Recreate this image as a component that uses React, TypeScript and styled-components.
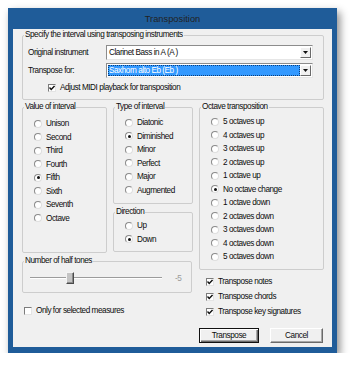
import styled, { createGlobalStyle } from 'styled-components';

const GlobalStyle = createGlobalStyle`
  html, body {
    margin: 0;
    padding: 0;
    background: #ffffff;
  }
  body {
    font-family: "Liberation Sans", Arial, sans-serif;
    font-size: 8.2px;
    letter-spacing: -0.45px;
    color: #0c0c0c;
  }
`;

const Window = styled.div`
  box-sizing: border-box;
  width: 329px;
  height: 345px;
  margin: 8px 0 0 8px;
  padding: 0 5px 6px;
  display: flex;
  flex-direction: column;
  background: #1f5c99;
  box-shadow: 3px 4px 8px rgba(0, 0, 0, 0.45);
`;

const TitleBar = styled.div`
  height: 21px;
  display: flex;
  align-items: center;
  justify-content: center;
  font-size: 9.3px;
  letter-spacing: 0;
  color: #222;
`;

const Client = styled.div`
  flex: 1;
  background: #f0f0f0;
  padding: 1px 8px 0 9px;
`;

const Group = styled.fieldset<{ $w: number; $h: number }>`
  box-sizing: border-box;
  width: ${p => p.$w}px;
  height: ${p => p.$h}px;
  margin: 0;
  padding: 0;
  min-inline-size: 0;
  border: 1px solid #cdcdcd;
  border-radius: 2px;
`;

const Legend = styled.legend`
  height: 10px;
  line-height: 10px;
  padding: 0 1px;
  margin-left: 1px;
  white-space: nowrap;
`;

const InstrumentGrid = styled.div`
  display: grid;
  grid-template-columns: 78px 207px;
  grid-auto-rows: 15px;
  row-gap: 3px;
  padding: 5px 0 0 5px;
  align-items: center;
`;

const Combo = styled.div`
  box-sizing: border-box;
  height: 15px;
  display: flex;
  background: #fff;
  border: 1px solid;
  border-color: #8c8c8c #e6e6e6 #e6e6e6 #8c8c8c;
  padding: 1px;
`;

const ComboText = styled.span<{ $selected?: boolean }>`
  flex: 1;
  display: flex;
  align-items: center;
  padding-left: 1px;
  white-space: nowrap;
  background: ${p => (p.$selected ? '#3399ff' : 'transparent')};
  color: ${p => (p.$selected ? '#ffffff' : 'inherit')};
  outline: ${p => (p.$selected ? '1px dotted #0b3d78' : 'none')};
  outline-offset: -1px;
`;

const DropButton = styled.span`
  box-sizing: border-box;
  width: 11px;
  display: flex;
  align-items: center;
  justify-content: center;
  background: #f0f0f0;
  border: 1px solid;
  border-color: #ffffff #6a6a6a #6a6a6a #ffffff;
`;

const CheckRow = styled.label<{ $indent?: number }>`
  display: flex;
  align-items: center;
  gap: 4px;
  height: 15px;
  margin-left: ${p => p.$indent ?? 0}px;
  white-space: nowrap;
`;

const CheckBox = styled.span`
  box-sizing: border-box;
  width: 8px;
  height: 8px;
  flex: none;
  display: flex;
  align-items: center;
  justify-content: center;
  background: #fff;
  border: 1px solid;
  border-color: #7c7c7c #e4e4e4 #e4e4e4 #7c7c7c;
`;

const MainRow = styled.div`
  display: flex;
  gap: 6px;
  margin-top: 2px;
`;

const Column = styled.div<{ $w: number }>`
  width: ${p => p.$w}px;
  display: flex;
  flex-direction: column;
`;

const GroupRow = styled.div`
  display: flex;
  gap: 6px;
`;

const Stack = styled.div`
  display: flex;
  flex-direction: column;
  gap: 3px;
`;

const OptionList = styled.div<{ $top: number }>`
  padding: ${p => p.$top}px 0 0 11px;
`;

const Option = styled.label`
  display: flex;
  align-items: center;
  gap: 4px;
  height: 13.5px;
  white-space: nowrap;
`;

const Radio = styled.span<{ $on?: boolean }>`
  box-sizing: border-box;
  width: 8px;
  height: 8px;
  flex: none;
  border-radius: 50%;
  display: flex;
  align-items: center;
  justify-content: center;
  background: #fff;
  border: 1px solid;
  border-color: #8a8a8a #dedede #dedede #8a8a8a;

  &::after {
    content: '';
    width: 3px;
    height: 3px;
    border-radius: 50%;
    background: ${p => (p.$on ? '#111' : 'transparent')};
  }
`;

const HalfTones = styled(Group)`
  margin-top: 3px;
`;

const SliderRow = styled.div`
  display: flex;
  align-items: center;
  height: 12px;
  padding: 6px 0 0 7px;
`;

const Track = styled.div`
  position: relative;
  width: 132px;
  height: 0;
  border-top: 1px solid #9c9c9c;
  border-bottom: 1px solid #ffffff;
`;

const Thumb = styled.span`
  position: absolute;
  top: -6px;
  box-sizing: border-box;
  width: 8px;
  height: 12px;
  background: #c4c4c4;
  border: 1px solid;
  border-color: #f4f4f4 #4a4a4a #4a4a4a #f4f4f4;
  box-shadow: inset -1px -1px 0 #8a8a8a;
`;

const SliderValue = styled.span`
  margin-left: 13px;
  color: #9a9a9a;
`;

const Buttons = styled.div`
  display: flex;
  gap: 11px;
  margin-top: 9px;
`;

const Button = styled.button<{ $w: number; $default?: boolean }>`
  box-sizing: border-box;
  width: ${p => p.$w}px;
  height: 15px;
  padding: 0;
  font: inherit;
  letter-spacing: inherit;
  color: inherit;
  background: #f0f0f0;
  border: 1px solid;
  border-color: ${p => (p.$default ? '#111' : '#ffffff #6a6a6a #6a6a6a #ffffff')};
  box-shadow: ${p =>
    p.$default
      ? 'inset 1px 1px 0 #fff, inset -1px -1px 0 #6a6a6a, inset -2px -2px 0 #a8a8a8'
      : 'inset -1px -1px 0 #a8a8a8'};
`;

const Check = () => (
  <svg width="6" height="6" viewBox="0 0 6 6">
    <path d="M0.5 2.6 L2.2 4.4 L5.5 0.9" stroke="#111" strokeWidth="1.4" fill="none" />
  </svg>
);

const Arrow = () => (
  <svg width="5" height="3" viewBox="0 0 5 3">
    <path d="M0 0 H5 L2.5 3 Z" fill="#111" />
  </svg>
);

const intervals = ['Unison', 'Second', 'Third', 'Fourth', 'Fifth', 'Sixth', 'Seventh', 'Octave'];
const types = ['Diatonic', 'Diminished', 'Minor', 'Perfect', 'Major', 'Augmented'];
const octaves = [
  '5 octaves up',
  '4 octaves up',
  '3 octaves up',
  '2 octaves up',
  '1 octave up',
  'No octave change',
  '1 octave down',
  '2 octaves down',
  '3 octaves down',
  '4 octaves down',
  '5 octaves down',
];

const halfTones = { min: -12, max: 12, value: -5 };

function RadioGroup({ items, selected, top }: { items: string[]; selected: string; top: number }) {
  return (
    <OptionList $top={top}>
      {items.map(item => (
        <Option key={item}>
          <Radio $on={item === selected} />
          {item}
        </Option>
      ))}
    </OptionList>
  );
}

export default function App() {
  const thumbLeft = ((halfTones.value - halfTones.min) / (halfTones.max - halfTones.min)) * (132 - 8);

  return (
    <>
      <GlobalStyle />
      <Window>
        <TitleBar>Transposition</TitleBar>
        <Client>
          <Group $w={302} $h={70}>
            <Legend>Specify the interval using transposing instruments</Legend>
            <InstrumentGrid>
              <span>Original instrument</span>
              <Combo>
                <ComboText>Clarinet Bass in A (A )</ComboText>
                <DropButton><Arrow /></DropButton>
              </Combo>
              <span>Transpose for:</span>
              <Combo>
                <ComboText $selected>Saxhorn alto Eb (Eb )</ComboText>
                <DropButton><Arrow /></DropButton>
              </Combo>
            </InstrumentGrid>
            <CheckRow $indent={25} style={{ marginTop: 2 }}>
              <CheckBox><Check /></CheckBox>
              Adjust MIDI playback for transposition
            </CheckRow>
          </Group>

          <MainRow>
            <Column $w={171}>
              <GroupRow>
                <Group $w={85} $h={151}>
                  <Legend>Value of interval</Legend>
                  <RadioGroup items={intervals} selected="Fifth" top={5} />
                </Group>
                <Stack>
                  <Group $w={80} $h={102}>
                    <Legend>Type of interval</Legend>
                    <RadioGroup items={types} selected="Diminished" top={4} />
                  </Group>
                  <Group $w={80} $h={45}>
                    <Legend>Direction</Legend>
                    <RadioGroup items={['Up', 'Down']} selected="Down" top={2} />
                  </Group>
                </Stack>
              </GroupRow>
              <HalfTones $w={170} $h={37}>
                <Legend>Number of half tones</Legend>
                <SliderRow>
                  <Track>
                    <Thumb style={{ left: thumbLeft }} />
                  </Track>
                  <SliderValue>{halfTones.value}</SliderValue>
                </SliderRow>
              </HalfTones>
              <CheckRow $indent={2} style={{ marginTop: 10 }}>
                <CheckBox />
                Only for selected measures
              </CheckRow>
            </Column>

            <Column $w={125}>
              <Group $w={125} $h={168}>
                <Legend>Octave transposition</Legend>
                <RadioGroup items={octaves} selected="No octave change" top={3} />
              </Group>
              <div style={{ marginTop: 4 }}>
                {['Transpose notes', 'Transpose chords', 'Transpose key signatures'].map(label => (
                  <CheckRow key={label} $indent={7}>
                    <CheckBox><Check /></CheckBox>
                    {label}
                  </CheckRow>
                ))}
              </div>
              <Buttons>
                <Button $w={60} $default>Transpose</Button>
                <Button $w={53}>Cancel</Button>
              </Buttons>
            </Column>
          </MainRow>
        </Client>
      </Window>
    </>
  );
}
